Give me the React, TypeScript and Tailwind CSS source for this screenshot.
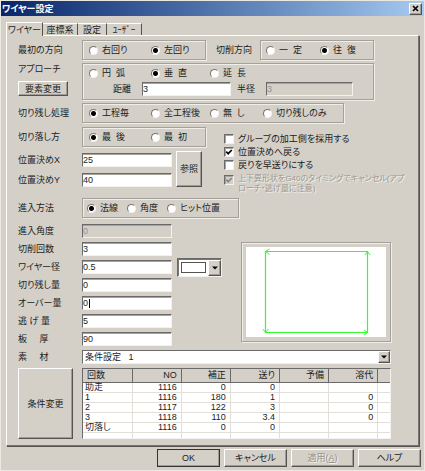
import type { ReactNode } from "react";
import clsx from "clsx";

const sunken =
  "border border-t-[#6a6a6a] border-l-[#6a6a6a] border-b-[#f4f2ee] border-r-[#f4f2ee]";
const raised =
  "border border-t-white border-l-white border-b-[#55534f] border-r-[#55534f] shadow-[inset_-1px_-1px_0_#a09d96]";

interface Option {
  text: string;
  width: string;
}

interface Condition {
  count: string;
  no: string;
  offset: string;
  feed: string;
  spare: string;
  melt: string;
}

const tabs = ["座標系", "設定", "ﾕｰｻﾞｰ"];

const columns = ["回数", "NO", "補正", "送り", "予備", "溶代"];

const conditions: Condition[] = [
  { count: "助走", no: "1116", offset: "0", feed: "0", spare: "", melt: "" },
  { count: "1", no: "1116", offset: "180", feed: "1", spare: "", melt: "0" },
  { count: "2", no: "1117", offset: "122", feed: "3", spare: "", melt: "0" },
  { count: "3", no: "1118", offset: "110", feed: "3.4", spare: "", melt: "0" },
  { count: "切落し", no: "1116", offset: "0", feed: "0", spare: "", melt: "" },
];

function Group({ className, children }: { className?: string; children: ReactNode }) {
  return (
    <div
      className={clsx(
        "border border-[#a3a19c] shadow-[1px_1px_0_#f0eee9,inset_1px_1px_0_#f0eee9]",
        className
      )}
    >
      {children}
    </div>
  );
}

function Radios({ name, options, checked }: { name: string; options: Option[]; checked: number }) {
  return (
    <div className="flex h-[18px] items-center">
      {options.map((o, i) => (
        <label key={o.text} className={clsx("flex shrink-0 items-center gap-1", o.width)}>
          <input
            type="radio"
            name={name}
            defaultChecked={i === checked}
            className="size-[9px] shrink-0 appearance-none rounded-full border border-t-[#77756f] border-r-[#f4f2ee] border-b-[#f4f2ee] border-l-[#77756f] bg-white checked:bg-[radial-gradient(circle,#000_2px,#fff_3px)]"
          />
          {o.text}
        </label>
      ))}
    </div>
  );
}

function RowLabel({ htmlFor, children }: { htmlFor?: string; children: ReactNode }) {
  const Tag = htmlFor ? "label" : "span";
  return (
    <Tag htmlFor={htmlFor} className="w-16 shrink-0">
      {children}
    </Tag>
  );
}

function TextBox({
  id,
  value,
  disabled,
  width = "w-[90px]",
}: {
  id: string;
  value: string;
  disabled?: boolean;
  width?: string;
}) {
  return (
    <input
      id={id}
      type="text"
      defaultValue={value}
      disabled={disabled}
      className={clsx(
        "h-[14px] rounded-none leading-3 outline-none shadow-[inset_0_1px_0_#a5a39e]",
        sunken,
        width,
        disabled ? "bg-[#d4d0c8] text-[#96938c]" : "bg-white"
      )}
    />
  );
}

function Field({
  id,
  label,
  value,
  disabled,
  caret,
}: {
  id: string;
  label: string;
  value: string;
  disabled?: boolean;
  caret?: boolean;
}) {
  return (
    <div className="flex h-[14px] items-center">
      <RowLabel htmlFor={id}>{label}</RowLabel>
      <div className="relative flex">
        <TextBox id={id} value={value} disabled={disabled} />
        {caret && <span className="absolute top-[3px] left-[7px] h-[9px] w-px bg-black" />}
      </div>
    </div>
  );
}

function Check({
  children,
  checked,
  disabled,
}: {
  children: ReactNode;
  checked?: boolean;
  disabled?: boolean;
}) {
  return (
    <label
      className={clsx(
        "flex gap-1",
        disabled &&
          "pt-[2px] text-[8px] leading-[10px] text-[#9b9891] [text-shadow:1px_1px_0_#f4f2ee]"
      )}
    >
      <span className="relative mt-px flex size-[10px] shrink-0">
        <input
          type="checkbox"
          defaultChecked={checked}
          disabled={disabled}
          className={clsx(
            "peer size-[10px] appearance-none shadow-[inset_1px_1px_0_#a5a39e]",
            sunken,
            disabled ? "bg-[#d4d0c8]" : "bg-white"
          )}
        />
        <svg
          viewBox="0 0 10 10"
          className="pointer-events-none absolute inset-0 hidden peer-checked:block"
          fill="none"
          stroke={disabled ? "#8a8780" : "#000"}
          strokeWidth="1.7"
        >
          <path d="M2.3 4.6L4.2 6.7L7.8 3" />
        </svg>
      </span>
      <span>{children}</span>
    </label>
  );
}

function Button({
  className,
  disabled,
  children,
}: {
  className?: string;
  disabled?: boolean;
  children: ReactNode;
}) {
  return (
    <button
      type="button"
      disabled={disabled}
      className={clsx(
        "shrink-0 bg-[#d4d0c8]",
        raised,
        disabled && "text-[#96938c] [text-shadow:1px_1px_0_#f4f2ee]",
        className
      )}
    >
      {children}
    </button>
  );
}

function Arrow({ className }: { className: string }) {
  return (
    <span
      className={clsx(
        "pointer-events-none absolute flex items-center justify-center bg-[#d4d0c8]",
        raised,
        className
      )}
    >
      <svg width="6" height="4" viewBox="0 0 6 4">
        <path d="M0 0.5H6L3 3.5Z" fill="#000" />
      </svg>
    </span>
  );
}

function Preview() {
  return (
    <Group className="mt-[18px] ml-auto w-[150px] p-1">
      <svg viewBox="0 0 140 90" className="block w-full bg-white" fill="none" stroke="#35fb35">
        <path d="M19.5 4.5H121.5V85.5H19.5Z" strokeWidth="1.2" />
        <path d="M23.5 2L19.5 4.5L23.5 7.5M119 8L121.5 4.5L124 8M17 82L19.5 85.5L22.5 82M118 83L121.5 85.5L118 88" />
      </svg>
    </Group>
  );
}

function ConditionTable() {
  return (
    <div className={clsx("h-[71px] flex-1 overflow-hidden bg-white", sunken)}>
      <table className="w-full table-fixed border-collapse">
        <thead>
          <tr className="h-[13px] bg-[#d4d0c8]">
            {columns.map((c, i) => (
              <th
                key={c}
                className={clsx(
                  "w-[16%] border-r border-b border-[#6a6a6a] px-1 py-0 font-normal leading-3",
                  i === 0 ? "text-left" : "text-right"
                )}
              >
                {c}
              </th>
            ))}
            <th className="border-b border-[#6a6a6a] p-0" />
          </tr>
        </thead>
        <tbody>
          {conditions.map((row) => (
            <tr key={row.count} className="h-[10px]">
              {Object.values(row).map((v, i) => (
                <td
                  key={i}
                  className={clsx(
                    "border-r border-b border-[#e2dfd8] py-0 leading-[9px]",
                    i === 0 ? "pl-[2px] text-left" : "pr-1 text-right"
                  )}
                >
                  {v}
                </td>
              ))}
              <td className="border-b border-[#e2dfd8] p-0" />
            </tr>
          ))}
          <tr className="h-[10px]">
            {columns.map((c) => (
              <td key={c} className="border-r border-[#e2dfd8] p-0" />
            ))}
            <td className="p-0" />
          </tr>
        </tbody>
      </table>
    </div>
  );
}

export default function App() {
  return (
    <div className="min-h-screen border border-[#ebe8e2] bg-[#d4d0c8] font-['Liberation_Sans','Noto_Sans_CJK_JP',sans-serif] text-[9px] leading-3 whitespace-pre text-[#1c1c1c] [font-feature-settings:'palt']">
      <header className="flex h-[15px] items-center justify-between bg-linear-to-r from-[#0a246a] to-[#a6caf0] pr-[2px] pl-px">
        <h1 className="font-bold text-white">ワイヤー設定</h1>
        <button
          type="button"
          aria-label="閉じる"
          className={clsx("flex h-[12px] w-[13px] items-center justify-center bg-[#d4d0c8]", raised)}
        >
          <svg width="7" height="7" viewBox="0 0 7 7" stroke="#000" strokeWidth="1.6">
            <path d="M1 1L6 6M6 1L1 6" />
          </svg>
        </button>
      </header>

      <div className="px-[5px] pt-[5px]">
        <div role="tablist" className="flex h-[14px] items-end">
          <button
            role="tab"
            aria-selected
            className="relative top-px h-[14px] w-[37px] border-t border-r border-l border-t-white border-r-[#55534f] border-l-white bg-[#d4d0c8]"
          >
            ワイヤー
          </button>
          {tabs.map((t, i) => (
            <button
              key={t}
              role="tab"
              className={clsx(
                "h-[12px] border-t border-r border-t-white border-r-[#55534f]",
                i === 1 ? "w-[29px]" : "w-[35px]"
              )}
            >
              {t}
            </button>
          ))}
        </div>

        <main className="border border-t-white border-r-[#77756f] border-b-[#77756f] border-l-white pt-1 pr-[27px] pb-[6px] pl-[11px] shadow-[1px_1px_0_#55534f]">
          <div className="flex items-center">
            <RowLabel>最初の方向</RowLabel>
            <Group className="w-[124px] pl-[6px]">
              <Radios
                name="direction"
                checked={1}
                options={[
                  { text: "右回り", width: "w-[62px]" },
                  { text: "左回り", width: "w-[52px]" },
                ]}
              />
            </Group>
            <span className="ml-[10px] w-[44px]">切削方向</span>
            <Group className="w-[114px] pl-[5px]">
              <Radios
                name="cutting"
                checked={1}
                options={[
                  { text: "一  定", width: "w-[54px]" },
                  { text: "往  復", width: "w-[50px]" },
                ]}
              />
            </Group>
          </div>

          <div className="mt-[3px] flex">
            <div className="flex w-16 flex-col items-start gap-[6px]">
              <span>アプローチ</span>
              <Button className="h-[15px] w-[50px] leading-3">要素変更</Button>
            </div>
            <Group className="h-[37px] w-[292px] pl-[6px]">
              <Radios
                name="approach"
                checked={1}
                options={[
                  { text: "円  弧", width: "w-[62px]" },
                  { text: "垂  直", width: "w-[59px]" },
                  { text: "延  長", width: "w-[53px]" },
                ]}
              />
              <div className="flex items-center pl-6">
                <label htmlFor="distance" className="w-[29px]">距離</label>
                <TextBox id="distance" value="3" width="w-[89px]" />
                <label htmlFor="radius" className="ml-[6px] w-[29px]">半径</label>
                <TextBox id="radius" value="3" width="w-[87px]" disabled />
              </div>
            </Group>
          </div>

          <div className="mt-[3px] flex items-center">
            <RowLabel>切り残し処理</RowLabel>
            <Group className="w-[262px] pl-[6px]">
              <Radios
                name="uncut"
                checked={0}
                options={[
                  { text: "工程毎", width: "w-[62px]" },
                  { text: "全工程後", width: "w-[59px]" },
                  { text: "無  し", width: "w-[53px]" },
                  { text: "切り残しのみ", width: "w-[70px]" },
                ]}
              />
            </Group>
          </div>

          <div className="mt-1 flex">
            <div className="w-[206px] shrink-0">
              <div className="flex items-center">
                <RowLabel>切り落し方</RowLabel>
                <Group className="w-[124px] pl-[6px]">
                  <Radios
                    name="cutoff"
                    checked={0}
                    options={[
                      { text: "最  後", width: "w-[62px]" },
                      { text: "最  初", width: "w-[52px]" },
                    ]}
                  />
                </Group>
              </div>
              <div className="mt-1 flex gap-1">
                <div className="flex flex-col gap-[6px] pt-[2px]">
                  <Field id="posx" label="位置決めX" value="25" />
                  <Field id="posy" label="位置決めY" value="40" />
                </div>
                <Button className="h-[36px] w-[26px]">参照</Button>
              </div>
            </div>
            <div className="flex flex-col gap-px pt-[6px]">
              <Check>グループの加工側を採用する</Check>
              <Check checked>位置決めへ戻る</Check>
              <Check>戻りを早送りにする</Check>
              <Check checked disabled>
                {"上下異形状をG40のタイミングでキャンセル(アプ\nローチ・逃げ量に注意)"}
              </Check>
            </div>
          </div>

          <div className="mt-1 flex items-center">
            <RowLabel>進入方法</RowLabel>
            <Group className="w-[157px] pl-1">
              <Radios
                name="entry"
                checked={0}
                options={[
                  { text: "法線", width: "w-10" },
                  { text: "角度", width: "w-10" },
                  { text: "ヒット位置", width: "w-[60px]" },
                ]}
              />
            </Group>
          </div>

          <div className="mt-[6px] flex items-start">
            <div className="flex flex-col gap-1">
              <Field id="angle" label="進入角度" value="0" disabled />
              <Field id="times" label="切削回数" value="3" />
              <Field id="wire" label="ワイヤー径" value="0.5" />
              <Field id="remain" label="切り残し量" value="0" />
              <Field id="over" label="オーバー量" value="0" caret />
              <Field id="escape" label="逃 げ 量" value="5" />
              <Field id="thick" label="板     厚" value="90" />
            </div>
            <div className="relative mt-[34px] ml-[5px] h-[19px] w-[45px]">
              <select
                aria-label="色"
                className={clsx(
                  "size-full appearance-none bg-white shadow-[inset_1px_1px_0_#77756f]",
                  sunken
                )}
              >
                <option />
              </select>
              <span className="pointer-events-none absolute top-1 left-1 h-[11px] w-[25px] border border-[#55534f] bg-white" />
              <Arrow className="top-[2px] right-px h-[16px] w-[13px]" />
            </div>
            <Preview />
          </div>

          <div className="mt-1 flex items-center">
            <RowLabel htmlFor="material">素     材</RowLabel>
            <div className="relative h-[14px] flex-1">
              <select
                id="material"
                className={clsx("block size-full appearance-none bg-white pl-[2px] leading-3", sunken)}
              >
                <option>条件設定&nbsp;&nbsp;&nbsp;1</option>
              </select>
              <Arrow className="top-px right-px h-[12px] w-[12px]" />
            </div>
          </div>

          <div className="mt-1 flex">
            <Button className="mr-[9px] h-[71px] w-[55px]">条件変更</Button>
            <ConditionTable />
          </div>
        </main>
      </div>

      <footer className="flex justify-end gap-1 pt-[3px] pr-[3px]">
        <Button className="h-[18px] w-[63px] outline outline-[#333] -outline-offset-1">OK</Button>
        <Button className="h-[18px] w-[63px]">キャンセル</Button>
        <Button className="h-[18px] w-[63px]" disabled>
          適用(<u>A</u>)
        </Button>
        <Button className="h-[18px] w-[63px]">ヘルプ</Button>
      </footer>
    </div>
  );
}
